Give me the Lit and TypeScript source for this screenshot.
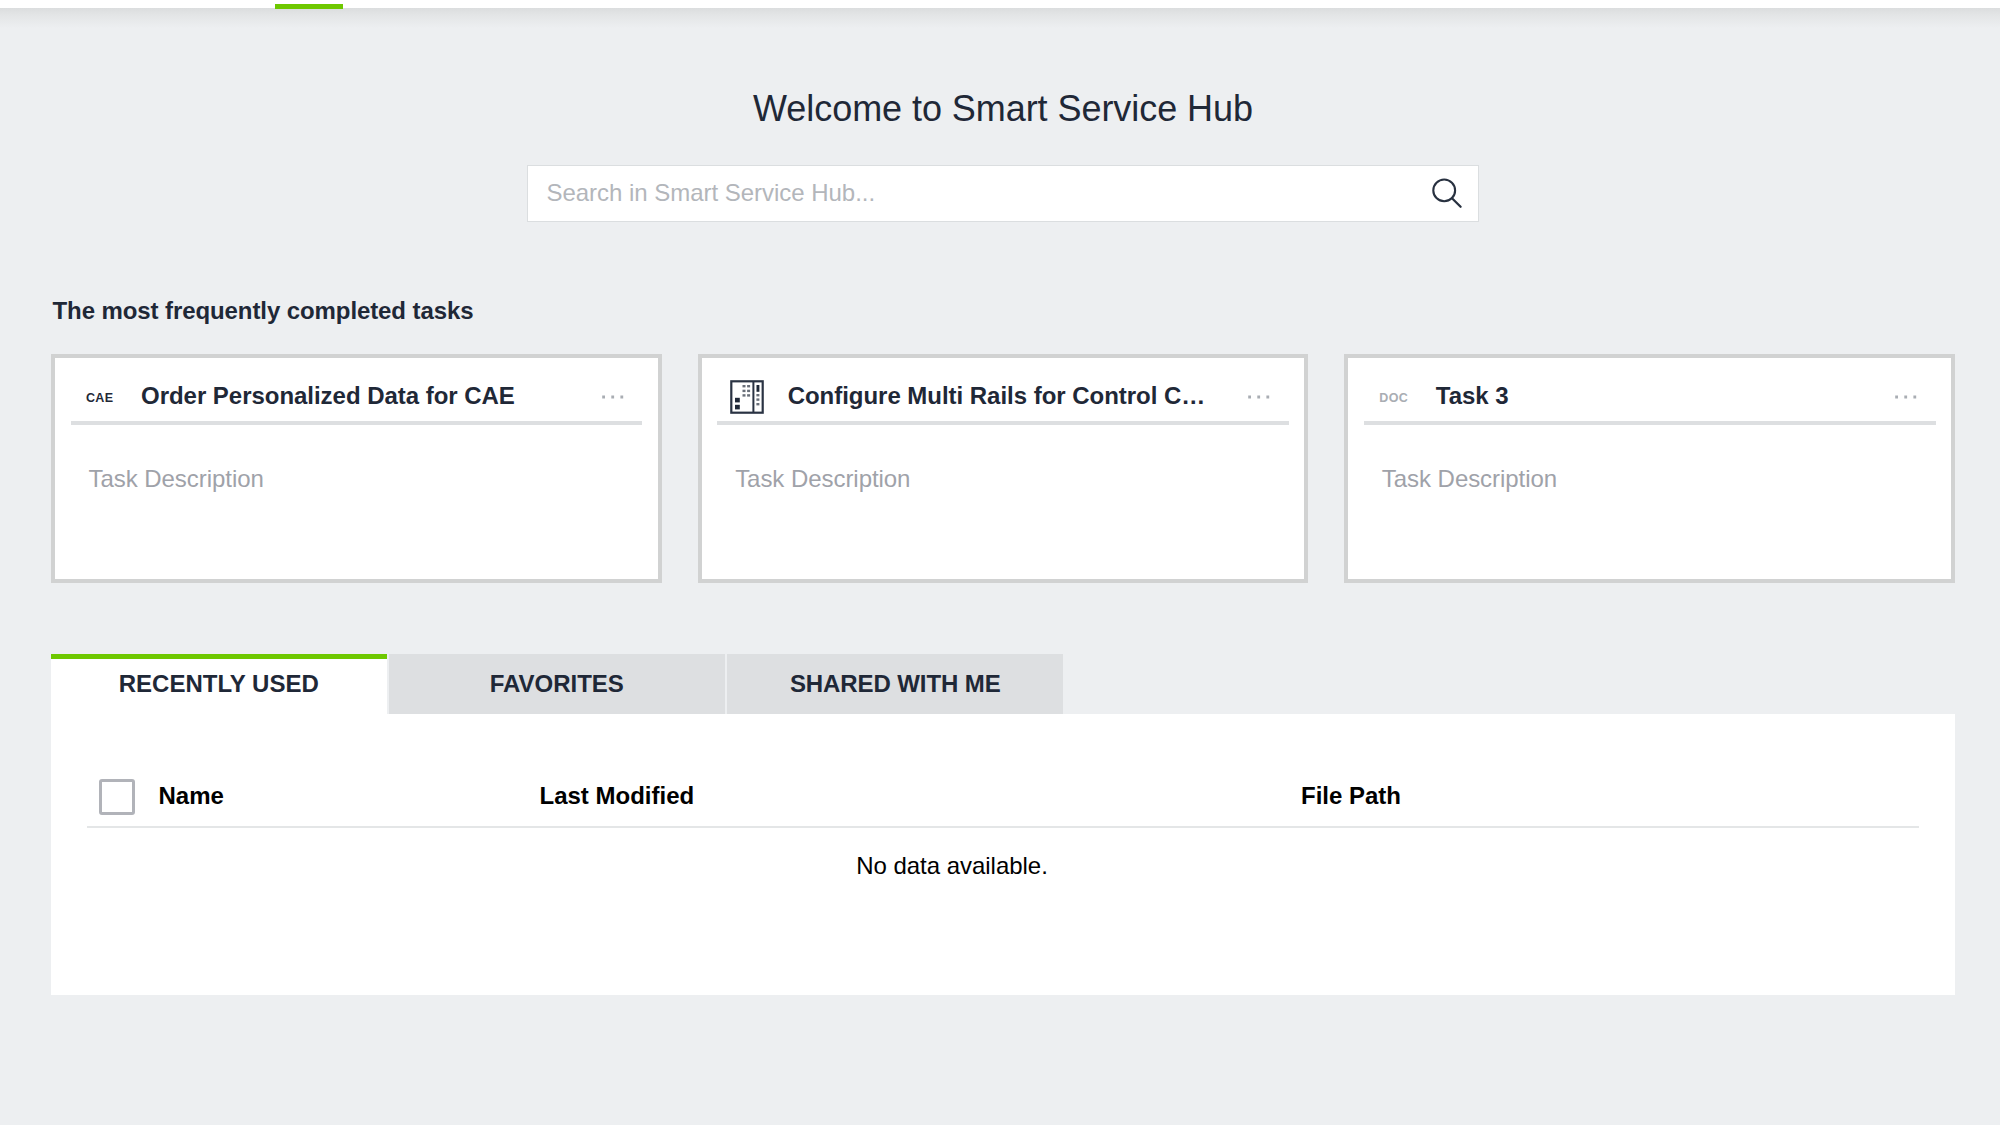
import { LitElement, html, css, svg, nothing } from "lit";
import { customElement, property, state } from "lit/decorators.js";
import { classMap } from "lit/directives/class-map.js";

type TaskIcon = "cae" | "cabinet" | "doc";

interface Task {
  icon: TaskIcon;
  title: string;
  description: string;
}

const TASKS: Task[] = [
  { icon: "cae", title: "Order Personalized Data for CAE", description: "Task Description" },
  { icon: "cabinet", title: "Configure Multi Rails for Control C…", description: "Task Description" },
  { icon: "doc", title: "Task 3", description: "Task Description" },
];

const TABS = ["RECENTLY USED", "FAVORITES", "SHARED WITH ME"];

@customElement("task-card")
export class TaskCard extends LitElement {
  @property({ attribute: false }) task!: Task;

  static styles = css`
    :host {
      display: block;
      box-sizing: border-box;
      height: 229px;
      border: 4px solid #d1d2d2;
      background: #fff;
      padding: 14px 15.5px 0;
    }
    .head {
      display: flex;
      align-items: center;
      height: 49px;
      border-bottom: 4px solid #dddfe1;
      color: #1f2837;
    }
    .icon {
      flex: none;
      display: flex;
      align-items: center;
      box-sizing: border-box;
      width: 70.5px;
      padding-left: 15.5px;
      height: 46px;
      font-size: 12.5px;
      font-weight: 700;
      line-height: 46px;
      letter-spacing: 0.3px;
    }
    .icon span {
      padding-top: 2px;
    }
    .icon.doc {
      width: 72px;
      color: #a9adb3;
    }
    .icon.cabinet {
      padding-left: 12.5px;
    }
    .title {
      flex: 1;
      font-size: 24px;
      font-weight: 700;
      line-height: 46px;
      letter-spacing: -0.03px;
      white-space: nowrap;
      margin-top: -1px;
    }
    .more {
      flex: none;
      margin-right: 17.5px;
    }
    svg {
      display: block;
    }
    .desc {
      margin: 0;
      padding: 39px 18px 0;
      font-size: 24px;
      line-height: 30px;
      letter-spacing: -0.05px;
      color: #9fa2a9;
    }
  `;

  private renderIcon() {
    if (this.task.icon === "cabinet") {
      const dots = [6.2, 10.9, 15.4].flatMap((y) =>
        [14, 18.6].map((x) => svg`<rect x=${x - 1.5} y=${y - 1.2} width="3" height="2.4" />`)
      );
      const slots = [15.2, 19.6, 24.2].map(
        (y) => svg`<rect x="26.4" y=${y - 1.2} width="3" height="2.4" />`
      );
      return html`<svg width="34" height="34" viewBox="0 0 34 34" fill="#1f2837">
        <rect x="1.3" y="1.3" width="31.4" height="31.4" fill="none" stroke="#2a3343" stroke-width="2.2" />
        <path d="M23.4 1V33" stroke="#2a3343" stroke-width="2" />
        <rect x="5" y="17.8" width="4.8" height="4.6" />
        <rect x="5" y="24.8" width="4.8" height="4.6" />
        <rect x="26.5" y="5" width="2.9" height="6.8" />
        <g fill="#696f79">${dots}${slots}</g>
      </svg>`;
    }
    return html`<span>${this.task.icon.toUpperCase()}</span>`;
  }

  render() {
    if (!this.task) return nothing;
    return html`
      <div class="head">
        <div class=${classMap({ icon: true, [this.task.icon]: true })}>${this.renderIcon()}</div>
        <div class="title">${this.task.title}</div>
        <svg class="more" width="23" height="4" viewBox="0 0 23 4" fill="#a9adb3">
          <rect x="0.2" y="0.5" width="2.8" height="3" />
          <rect x="9.3" y="0.5" width="2.8" height="3" />
          <rect x="18.4" y="0.5" width="2.8" height="3" />
        </svg>
      </div>
      <p class="desc">${this.task.description}</p>
    `;
  }
}

@customElement("app-root")
export class AppRoot extends LitElement {
  @state() private activeTab = 0;

  static styles = css`
    :host {
      display: block;
      box-sizing: border-box;
      height: 1125px;
      overflow: hidden;
      background: #edeff1;
      font-family: "Liberation Sans", Arial, sans-serif;
      color: #1f2837;
    }
    .topbar {
      display: flex;
      align-items: flex-end;
      box-sizing: border-box;
      height: 8px;
      padding-left: 275px;
      background: #fff;
    }
    .marker {
      width: 68px;
      height: 5px;
      margin-bottom: -0.6px;
      background: #6ec800;
    }
    .shadow {
      height: 20px;
      background: linear-gradient(#dbddde, #e3e5e6 35%, #edeff1);
    }
    main {
      padding: 0 45px 0 51px;
    }
    h1 {
      margin: 0;
      padding-top: 60px;
      font-size: 36px;
      font-weight: 400;
      line-height: 41px;
      letter-spacing: -0.06px;
      text-align: center;
    }
    .search {
      display: flex;
      align-items: center;
      justify-content: space-between;
      box-sizing: border-box;
      width: 952px;
      height: 57px;
      margin: 36px auto 0;
      padding: 0 15px 0 18.5px;
      border: 1px solid #dbdee0;
      background: #fff;
    }
    .placeholder {
      font-size: 24px;
      line-height: 30px;
      letter-spacing: -0.03px;
      color: #b3b6bb;
      margin-top: -2px;
    }
    svg {
      display: block;
    }
    h2 {
      margin: 0;
      padding: 74px 0 0 1.5px;
      font-size: 24px;
      font-weight: 700;
      line-height: 30px;
      letter-spacing: -0.09px;
    }
    .cards {
      display: grid;
      grid-template-columns: repeat(3, 1fr);
      column-gap: 36px;
      margin-top: 28px;
    }
    .tabs {
      display: flex;
      gap: 2.5px;
      margin-top: 71px;
    }
    .tab {
      box-sizing: border-box;
      width: 335.5px;
      height: 60px;
      padding-top: 15px;
      background: #dddfe1;
      font-size: 24px;
      font-weight: 700;
      line-height: 30px;
      text-align: center;
      cursor: pointer;
    }
    .tab:last-child {
      letter-spacing: -0.1px;
      padding-left: 1px;
    }
    .tab.active {
      border-top: 5px solid #6ec800;
      padding-top: 10px;
      background: #fff;
    }
    .panel {
      box-sizing: border-box;
      height: 281px;
      padding: 54px 36px 0;
      background: #fff;
      font-size: 24px;
      line-height: 30px;
      color: #000;
    }
    .row {
      display: grid;
      grid-template-columns: 71.5px 381px 761.5px 1fr;
      align-items: center;
      box-sizing: border-box;
      height: 60px;
      padding-bottom: 3px;
      border-bottom: 2px solid #e4e6e7;
      font-weight: 700;
    }
    .check {
      box-sizing: border-box;
      width: 36px;
      height: 36px;
      margin: 3px 0 0 12px;
      border: 3px solid #b1b3b9;
      border-radius: 3px;
      background: #fff;
    }
    .empty {
      padding: 23px 0 0;
      width: 1730px;
      letter-spacing: -0.03px;
      text-align: center;
    }
  `;

  render() {
    return html`
      <div class="topbar"><div class="marker"></div></div>
      <div class="shadow"></div>
      <main>
        <h1>Welcome to Smart Service Hub</h1>
        <div class="search">
          <span class="placeholder">Search in Smart Service Hub...</span>
          <svg width="32" height="32" viewBox="0 0 32 32" fill="none" stroke="#283140" stroke-width="2.1" stroke-linecap="round">
            <circle cx="13.2" cy="12.4" r="10.9" />
            <path d="M21 20.3L29.6 28.8" stroke-width="2.3" />
          </svg>
        </div>
        <h2>The most frequently completed tasks</h2>
        <section class="cards">
          ${TASKS.map((task) => html`<task-card .task=${task}></task-card>`)}
        </section>
        <nav class="tabs">
          ${TABS.map(
            (label, i) => html`<div
              class=${classMap({ tab: true, active: i === this.activeTab })}
              @click=${() => (this.activeTab = i)}
            >${label}</div>`
          )}
        </nav>
        <section class="panel">
          <div class="row">
            <div class="check"></div>
            <div>Name</div>
            <div>Last Modified</div>
            <div>File Path</div>
          </div>
          <div class="empty">No data available.</div>
        </section>
      </main>
    `;
  }
}
